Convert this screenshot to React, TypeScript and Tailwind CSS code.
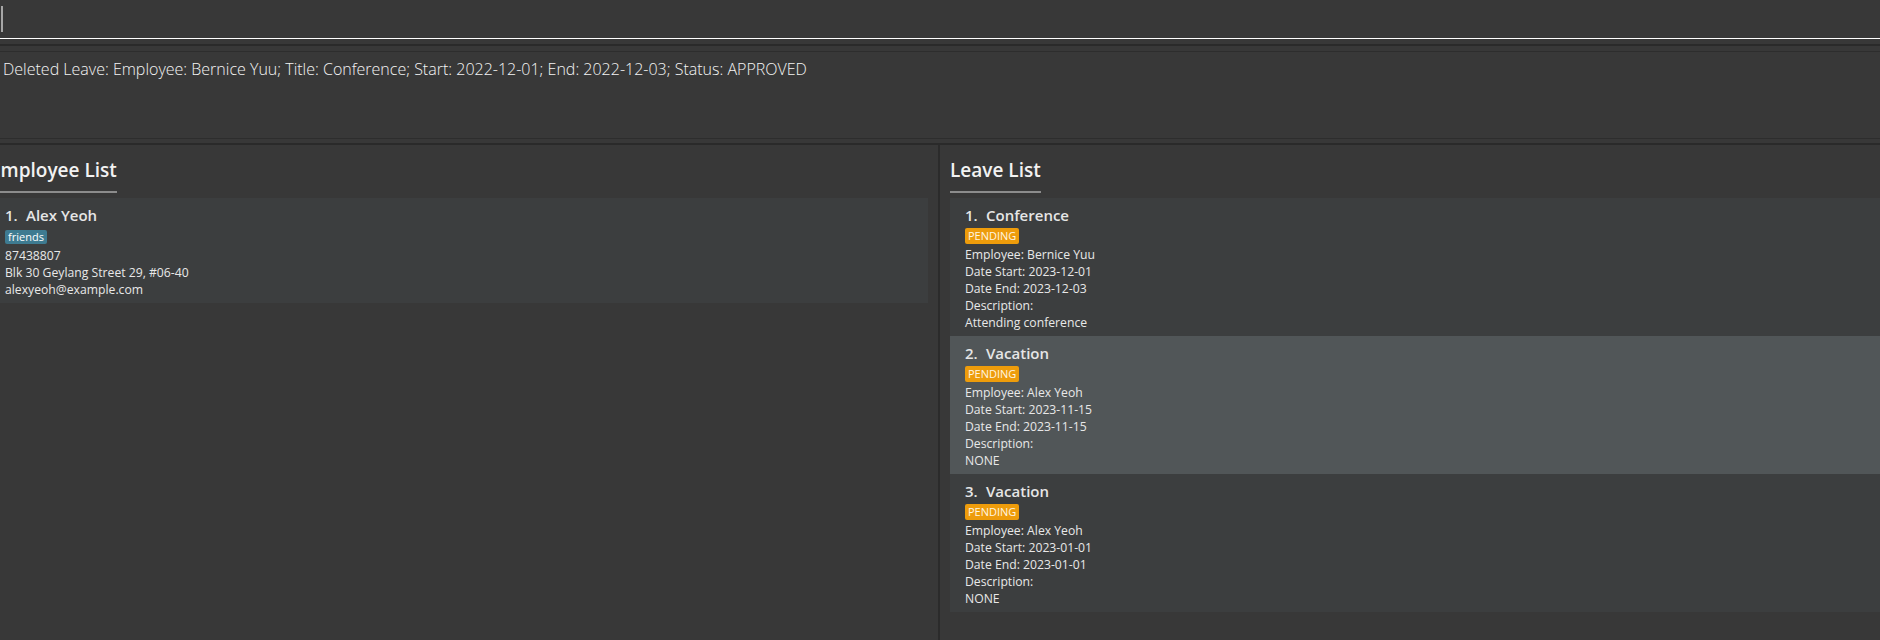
import React from 'react';

type Leave = {
  title: string;
  status: string;
  employee: string;
  start: string;
  end: string;
  description: string;
};

const leaves: Leave[] = [
  { title: 'Conference', status: 'PENDING', employee: 'Bernice Yuu', start: '2023-12-01', end: '2023-12-03', description: 'Attending conference' },
  { title: 'Vacation', status: 'PENDING', employee: 'Alex Yeoh', start: '2023-11-15', end: '2023-11-15', description: 'NONE' },
  { title: 'Vacation', status: 'PENDING', employee: 'Alex Yeoh', start: '2023-01-01', end: '2023-01-01', description: 'NONE' },
];

function PanelHeader({ title }: { title: string }) {
  return (
    <div className="pt-[12px]">
      <span className="inline-block pb-[7px] border-b-2 border-[#8c8c8c] text-[19px] leading-[27px] font-semibold text-[#f2f2f2]">
        {title}
      </span>
    </div>
  );
}

function CardTitle({ index, name }: { index: number; name: string }) {
  return (
    <div className="flex h-[21px] items-center text-[15px] leading-[21px] font-semibold text-[#e6e6e6]">
      <span className="w-[21px]">{index}.</span>
      <span>{name}</span>
    </div>
  );
}

function LeaveCard({ leave, index }: { leave: Leave; index: number }) {
  const odd = index % 2 === 0;
  return (
    <div className={odd ? 'bg-[#515658] pl-[15px] pt-[7px] pb-[5px]' : 'bg-[#3c3e3f] pl-[15px] pt-[7px] pb-[5px]'}>
      <CardTitle index={index} name={leave.title} />
      <div className="mt-[2px] flex">
        <span className="h-[16px] px-[3px] rounded-[2px] bg-[#ee9c0b] text-[11px] leading-[16px] text-[#fff6e2]">
          {leave.status}
        </span>
      </div>
      <div className="mt-[2px] text-[12.2px] leading-[17px] text-[#e8e8e8]">
        <div>Employee: {leave.employee}</div>
        <div>Date Start: {leave.start}</div>
        <div>Date End: {leave.end}</div>
        <div>Description:</div>
        <div>{leave.description}</div>
      </div>
    </div>
  );
}

export default function App() {
  return (
    <div className="w-[1880px] h-[640px] overflow-hidden bg-[#383838] flex flex-col font-['Open_Sans',sans-serif]">
      {/* command box */}
      <div className="h-[39px] border-b border-white">
        <div className="ml-[1px] mt-[6px] w-[2px] h-[26px] bg-[#a6a6a6]"></div>
      </div>
      <div className="h-[5px]"></div>
      <div className="h-[2px] bg-[#2a2a2a]"></div>
      <div className="h-[5px]"></div>
      <div className="h-[1px] bg-[#2d2d2d]"></div>

      {/* result display */}
      <div className="h-[86px] pl-[3px] pt-[6px] text-[16px] leading-[23px] font-light text-[#f4f4f4] whitespace-nowrap">
        Deleted Leave: Employee: Bernice Yuu; Title: Conference; Start: 2022-12-01; End: 2022-12-03; Status: APPROVED
      </div>
      <div className="h-[1px] bg-[#2d2d2d]"></div>
      <div className="h-[4px]"></div>
      <div className="h-[2px] bg-[#2a2a2a]"></div>

      {/* lists */}
      <div className="flex-1 flex min-h-0">
        <div className="w-[938px] pr-[10px] overflow-hidden">
          <div className="-ml-[10px]">
            <PanelHeader title="Employee List" />
            <div className="mt-[5px] bg-[#3c3e3f] pl-[15px] pt-[7px] pb-[5px]">
              <CardTitle index={1} name="Alex Yeoh" />
              <div className="mt-[4px] flex">
                <span className="h-[14px] px-[3px] rounded-[2px] bg-[#3e7b91] text-[11px] leading-[14px] text-white">
                  friends
                </span>
              </div>
              <div className="mt-[3px] text-[12.2px] leading-[17px] text-[#e8e8e8]">
                <div>87438807</div>
                <div>Blk 30 Geylang Street 29, #06-40</div>
                <div>alexyeoh@example.com</div>
              </div>
            </div>
          </div>
        </div>
        <div className="w-[2px] bg-[#2b2b2b]"></div>
        <div className="flex-1 pl-[10px] overflow-hidden">
          <PanelHeader title="Leave List" />
          <div className="mt-[5px]">
            {leaves.map((l, i) => (
              <LeaveCard key={i} leave={l} index={i + 1} />
            ))}
          </div>
        </div>
      </div>
    </div>
  );
}
